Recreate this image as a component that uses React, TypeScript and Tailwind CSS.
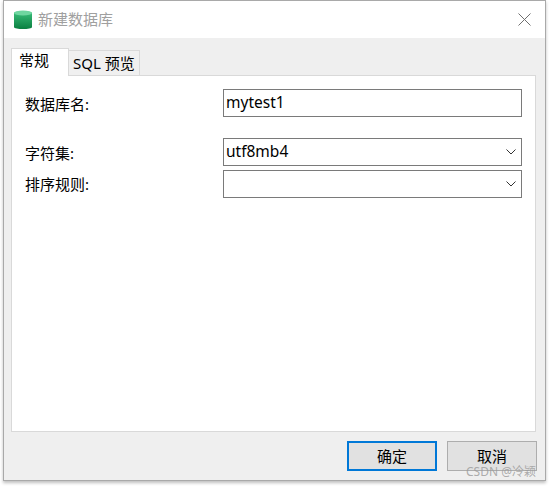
const font = "font-['Noto_Sans','Noto_Sans_CJK_SC',sans-serif]";

function DbIcon() {
  return (
    <svg width="18" height="20" viewBox="0 0 18 20">
      <defs>
        <linearGradient id="body" x1="0" y1="0" x2="0" y2="1">
          <stop offset="0" stopColor="#3cc07c" />
          <stop offset="1" stopColor="#0a7f40" />
        </linearGradient>
      </defs>
      <path d="M0 3 C0 .5 18 .5 18 3 V17 C18 19.7 0 19.7 0 17 Z" fill="url(#body)" />
      <ellipse cx="9" cy="3" rx="9" ry="2.6" fill="#6fd6a0" />
    </svg>
  );
}

function Select({ value }: { value?: string }) {
  return (
    <div className="flex h-7 w-[299px] items-center justify-between border border-[#7a7a7a] bg-white pl-[2px] pr-[5px] text-[15.5px] leading-none text-black">
      <span>{value}</span>
      <svg width="10" height="6" viewBox="0 0 10 6" className="stroke-[#333]">
        <path d="M.5 .5 L5 5 L9.5 .5" fill="none" strokeWidth="1" />
      </svg>
    </div>
  );
}

export default function App() {
  return (
    <div className={`relative h-[486px] w-[549px] overflow-hidden bg-white ${font}`}>
      <div className="ml-[3px] flex h-[481px] w-[543px] flex-col border-x border-b border-t border-[#a9a9a9] bg-[#efefef] shadow-[0_2px_3px_rgba(0,0,0,0.25)]">
        {/* Title bar */}
        <div className="flex h-[37px] shrink-0 items-center justify-between bg-white pl-[10px] pr-[14px]">
          <div className="flex items-center gap-[6px]">
            <DbIcon />
            <span className="text-[15px] text-[#a0a0a0]">新建数据库</span>
          </div>
          <svg width="13" height="13" viewBox="0 0 13 13" className="stroke-[#6f6f6f]">
            <path d="M.5 .5 L12.5 12.5 M12.5 .5 L.5 12.5" fill="none" strokeWidth="1" />
          </svg>
        </div>

        {/* Tabs */}
        <div className="flex h-[37px] shrink-0 items-end pl-[7px]">
          <div className="relative top-px z-10 flex h-[28px] w-[58px] items-center border border-b-0 border-[#d9d9d9] bg-white pb-[4px] pl-[7px] text-[15px] text-black">
            常规
          </div>
          <div className="flex h-[25px] w-[71px] items-center border border-l-0 border-b-0 border-[#d9d9d9] bg-[#f0f0f0] pl-[4px] text-[15px] text-black">
            SQL 预览
          </div>
        </div>

        {/* Panel */}
        <div className="mx-[7px] flex h-[357px] w-[525px] shrink-0 flex-col border border-[#d9d9d9] bg-white pl-[13px] pt-[13px] text-[15px] text-black">
          <div className="flex items-center justify-between pr-[13px]">
            <span className="pt-[2px]">数据库名:</span>
            <div className="flex h-7 w-[299px] items-center border border-[#7a7a7a] pl-[2px] text-[15.5px] leading-none">
              mytest1
            </div>
          </div>
          <div className="mt-[21px] flex items-center justify-between pr-[13px]">
            <span className="pt-[2px]">字符集:</span>
            <Select value="utf8mb4" />
          </div>
          <div className="mt-1 flex items-center justify-between pr-[13px]">
            <span>排序规则:</span>
            <Select />
          </div>
        </div>

        {/* Buttons */}
        <div className="flex justify-end gap-[10px] pr-[8px] pt-[9px]">
          <button className="h-[30px] w-[90px] border-2 border-[#0078d7] bg-[#e1e1e1] text-[15px] text-black">确定</button>
          <button className="h-[30px] w-[90px] border border-[#adadad] bg-[#e1e1e1] text-[15px] text-black">取消</button>
        </div>
      </div>

      {/* watermark */}
      <span className="absolute left-[466px] top-[464px] text-[12px] leading-[16px] text-[#9a9a9a]/80">CSDN @冷颖</span>
    </div>
  );
}
